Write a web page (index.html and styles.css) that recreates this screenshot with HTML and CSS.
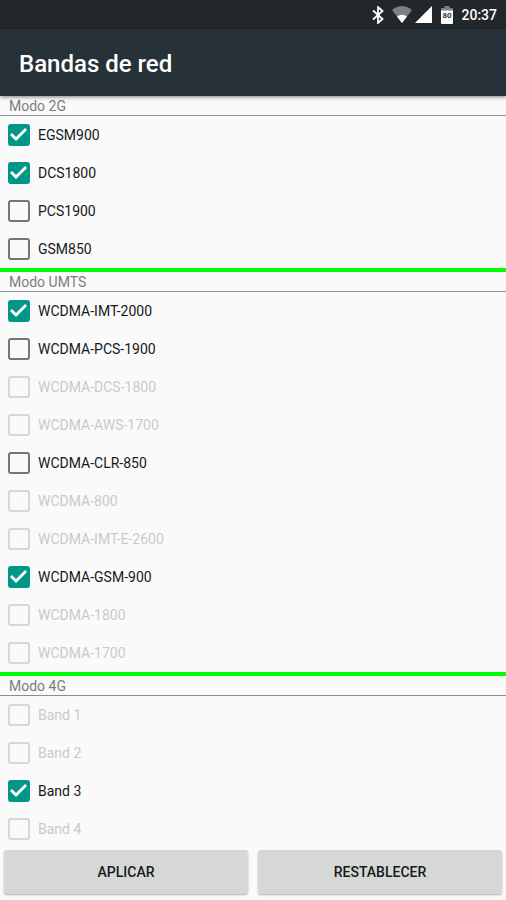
FILE: index.html
```html
<!DOCTYPE html>
<html lang="es">
<head>
  <meta charset="UTF-8" />
  <meta name="viewport" content="width=device-width, initial-scale=1.0"/>
  <title>Bandas de red</title>
  <link rel="stylesheet" href="styles.css">
</head>
<body>
  <div class="status-bar">
    <svg class="icon-bluetooth" width="12" height="18" viewBox="0 0 12 18" aria-hidden="true">
      <path d="M1 4.5 L10.5 13 L6 17 V1 L10.5 5 L1 13.5" fill="none" stroke="#fff" stroke-width="1.8"/>
    </svg>
    <svg class="icon-wifi" width="20" height="17" viewBox="0 0 20 17" aria-hidden="true">
      <path d="M0 4 Q10 -4 20 4 L10 17 Z" fill="#7b8083"/>
      <path d="M5 10.4 Q10 7 15 10.4 L10 17 Z" fill="#fff"/>
    </svg>
    <svg class="icon-signal" width="17" height="17" viewBox="0 0 17 17" aria-hidden="true">
      <path d="M17 0 V17 H0 Z" fill="#fff"/>
    </svg>
    <svg class="icon-battery" width="12" height="18" viewBox="0 0 12 18" aria-hidden="true">
      <path d="M3.5 0 H8.5 V2 H11 Q12 2 12 3 V5 H0 V3 Q0 2 1 2 H3.5 Z" fill="#7b8083"/>
      <path d="M0 4.5 H12 V17 Q12 18 11 18 H1 Q0 18 0 17 Z" fill="#fff"/>
      <text x="6" y="12" text-anchor="middle" class="battery-level">80</text>
    </svg>
    <span class="clock">20:37</span>
  </div>

  <header class="app-bar">
    <h1>Bandas de red</h1>
  </header>

  <main>
    <section class="band-group">
      <h2>Modo 2G</h2>
      <label class="band"><input type="checkbox" checked /> EGSM900</label>
      <label class="band"><input type="checkbox" checked /> DCS1800</label>
      <label class="band"><input type="checkbox" /> PCS1900</label>
      <label class="band"><input type="checkbox" /> GSM850</label>
    </section>

    <section class="band-group">
      <h2>Modo UMTS</h2>
      <label class="band"><input type="checkbox" checked /> WCDMA-IMT-2000</label>
      <label class="band"><input type="checkbox" /> WCDMA-PCS-1900</label>
      <label class="band disabled"><input type="checkbox" disabled /> WCDMA-DCS-1800</label>
      <label class="band disabled"><input type="checkbox" disabled /> WCDMA-AWS-1700</label>
      <label class="band"><input type="checkbox" /> WCDMA-CLR-850</label>
      <label class="band disabled"><input type="checkbox" disabled /> WCDMA-800</label>
      <label class="band disabled"><input type="checkbox" disabled /> WCDMA-IMT-E-2600</label>
      <label class="band"><input type="checkbox" checked /> WCDMA-GSM-900</label>
      <label class="band disabled"><input type="checkbox" disabled /> WCDMA-1800</label>
      <label class="band disabled"><input type="checkbox" disabled /> WCDMA-1700</label>
    </section>

    <section class="band-group">
      <h2>Modo 4G</h2>
      <label class="band disabled"><input type="checkbox" disabled /> Band 1</label>
      <label class="band disabled"><input type="checkbox" disabled /> Band 2</label>
      <label class="band"><input type="checkbox" checked /> Band 3</label>
      <label class="band disabled"><input type="checkbox" disabled /> Band 4</label>
    </section>
  </main>

  <footer class="actions">
    <button type="button">APLICAR</button>
    <button type="button">RESTABLECER</button>
  </footer>
</body>
</html>
```

FILE: styles.css
```css
:root {
  --bar: #263238;
  --status: #21272b;
  --bg: #fafafa;
  --text: #15191b;
  --muted: #7b7d7d;
  --off: #c8caca;
  --accent: #009688;
  --divider: #00ff00;
}

* {
  box-sizing: border-box;
}

body {
  margin: 0;
  font-family: Roboto, sans-serif;
  font-size: 14px;
  background-color: var(--bg);
  color: var(--text);
}

/* status bar */
.status-bar {
  display: flex;
  align-items: center;
  justify-content: flex-end;
  height: 29px;
  padding: 0 9px;
  background-color: var(--status);
  color: white;
}

.icon-bluetooth {
  margin-right: 8px;
}

.icon-wifi {
  margin-right: 3px;
}

.icon-signal {
  margin-right: 9px;
}

.icon-battery {
  margin-right: 8px;
}

.battery-level {
  font-size: 8px;
  font-weight: 700;
  fill: #333;
}

.clock {
  font-weight: 500;
}

/* title */
.app-bar {
  display: flex;
  align-items: center;
  position: relative;
  height: 67px;
  padding: 2px 19px 0;
  background-color: var(--bar);
  color: white;
  box-shadow: 0 1px 4px rgba(0, 0, 0, 0.5);
}

.app-bar h1 {
  margin: 0;
  font-size: 24px;
  font-weight: 500;
}

/* band lists */
.band-group + .band-group {
  border-top: 4px solid var(--divider);
}

.band-group h2 {
  height: 20px;
  margin: 0;
  padding-left: 9px;
  border-bottom: 1px solid #8c8e8e;
  font-size: 14px;
  font-weight: 400;
  line-height: 20px;
  color: var(--muted);
}

.band {
  display: flex;
  align-items: center;
  gap: 8px;
  height: 38px;
  padding: 0 8px;
  line-height: 18px;
}

.band.disabled {
  color: var(--off);
}

.band input {
  appearance: none;
  width: 22px;
  height: 22px;
  margin: 0;
  border: 2px solid #737676;
  border-radius: 3px;
}

.band input:disabled {
  border-color: #d6d8d8;
}

.band input:checked {
  border-color: var(--accent);
  background-color: var(--accent);
}

.band input:checked::after {
  content: "";
  display: block;
  width: 18px;
  height: 18px;
  background-color: white;
  clip-path: polygon(0 9px, 2px 7px, 6px 11px, 15px 2px, 17px 4px, 6px 15px);
}

/* buttons */
.actions {
  display: flex;
  gap: 10px;
  padding: 2px 4px 6px;
}

.actions button {
  flex: 1;
  height: 44px;
  border: none;
  border-radius: 3px;
  background-color: #d6d8d7;
  box-shadow: 0 1px 2px rgba(0, 0, 0, 0.3);
  font-family: inherit;
  font-size: 14px;
  font-weight: 500;
  color: var(--text);
}
```
